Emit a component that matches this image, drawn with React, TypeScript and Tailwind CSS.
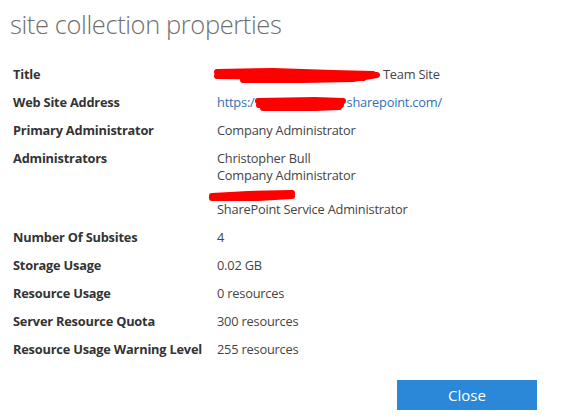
function Scribble({ w, paths }: { w: number; paths: string[] }) {
  return (
    <svg width={w} height={12} viewBox={`0 2 ${w} 12`} className="inline-block align-middle overflow-visible">
      {paths.map((d, i) => (
        <path key={i} d={d} stroke="#ff0000" strokeWidth={6} strokeLinecap="round" strokeLinejoin="round" fill="none" />
      ))}
    </svg>
  )
}

function Row({ label, children }: { label: string; children: React.ReactNode }) {
  return (
    <>
      <div className="font-bold text-[#333] leading-[17px]">{label}</div>
      <div className="text-[#444] leading-[17px]">{children}</div>
    </>
  )
}

export default function App() {
  return (
    <div
      className="w-[578px] h-[420px] bg-white relative overflow-hidden"
      style={{ fontFamily: '"Open Sans", "Noto Sans", sans-serif' }}
    >
      <h1 className="pl-[10px] pt-[6px] text-[25.5px] font-light text-[#6f6f6f] leading-[36px] tracking-[-0.4px]">
        site collection properties
      </h1>

      <div className="grid grid-cols-[204px_1fr] gap-y-[11px] pl-[13px] pt-[24px] text-[12.8px] tracking-[-0.2px]">
        <Row label="Title">
          <span className="relative -left-[4px]">
            <Scribble
              w={168}
              paths={[
                "M4 4 L60 3 L120 5 L160 6",
                "M4 8 L70 9 L110 8 L150 10",
                "M30 12 L90 12 L140 11 L164 7",
              ]}
            />
          </span>
          <span className="-ml-[2px]">Team Site</span>
        </Row>
        <Row label="Web Site Address">
          <span className="text-[#2f6fba]">
            https:/
            <Scribble w={92} paths={["M3 5 L60 4 L88 5", "M4 9 L50 10 L86 9", "M8 12 L60 12 L84 11"]} />
            sharepoint.com/
          </span>
        </Row>
        <Row label="Primary Administrator">Company Administrator</Row>
        <Row label="Administrators">
          <div>Christopher Bull</div>
          <div>Company Administrator</div>
          <div className="relative -left-[9px] h-[17px] leading-[17px]">
            <Scribble w={88} paths={["M4 10 L40 8 L84 7", "M4 12 L50 12 L84 10"]} />
          </div>
          <div>SharePoint Service Administrator</div>
        </Row>
        <Row label="Number Of Subsites">4</Row>
        <Row label="Storage Usage">0.02 GB</Row>
        <Row label="Resource Usage">0 resources</Row>
        <Row label="Server Resource Quota">300 resources</Row>
        <Row label="Resource Usage Warning Level">255 resources</Row>
      </div>

      <div className="flex justify-end pr-[41px] pt-[22px]">
        <button className="w-[140px] h-[30px] bg-[#2b88d8] text-white text-[15px]">Close</button>
      </div>
    </div>
  )
}
